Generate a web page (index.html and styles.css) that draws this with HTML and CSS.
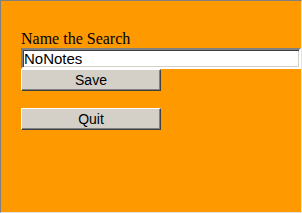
FILE: index.html
```html
<!DOCTYPE html>
<html lang="en">
<head>
    <meta charset="UTF-8">
    <title>Name the Search</title>
    <link rel="stylesheet" href="styles.css">
</head>
<body>

<div class="frame">
    <form class="search-form">
        <label for="searchName">Name the Search</label>
        <input type="text" id="searchName" class="name-input" value="NoNotes">
        <button type="button" class="win-button">Save</button>
        <button type="button" class="win-button quit">Quit</button>
    </form>
</div>

</body>
</html>
```

FILE: styles.css
```css
/* Page frame */
html, body {
    margin: 0;
    padding: 0;
}

body {
    background-color: #ff9900;
}

.frame {
    box-sizing: border-box;
    width: 302px;
    height: 213px;
    background-color: #ff9900;
    border-top: 1px solid #808080;
    border-left: 1px solid #808080;
    border-right: 1px solid #e4e4e4;
    border-bottom: 1px solid #e4e4e4;
    padding: 29px 0 0 20px;
}

.search-form {
    display: flex;
    flex-direction: column;
    align-items: flex-start;
}

label {
    font-family: "Liberation Serif", "Times New Roman", serif;
    font-size: 16px;
    line-height: 18px;
    color: #000;
}

/* Sunken text box */
.name-input {
    box-sizing: border-box;
    width: 280px;
    height: 21px;
    margin: 0;
    padding: 0 1px;
    font-family: "Liberation Sans", Arial, sans-serif;
    font-size: 15px;
    color: #000;
    background-color: #fff;
    border: 2px solid;
    border-color: #808080 #ffffff #ffffff #808080;
    box-shadow: inset 1px 1px 0 #404040, inset -1px -1px 0 #d4d0c8;
    outline: none;
}

/* Raised grey buttons */
.win-button {
    box-sizing: border-box;
    width: 140px;
    height: 22px;
    margin: 0;
    padding: 0;
    font-family: "Liberation Sans", Arial, sans-serif;
    font-size: 14px;
    color: #000;
    background-color: #d4d0c8;
    border: 1px solid;
    border-color: #ffffff #404040 #404040 #ffffff;
    box-shadow: inset -1px -1px 0 #808080;
}

.quit {
    margin-top: 17px;
}
```
